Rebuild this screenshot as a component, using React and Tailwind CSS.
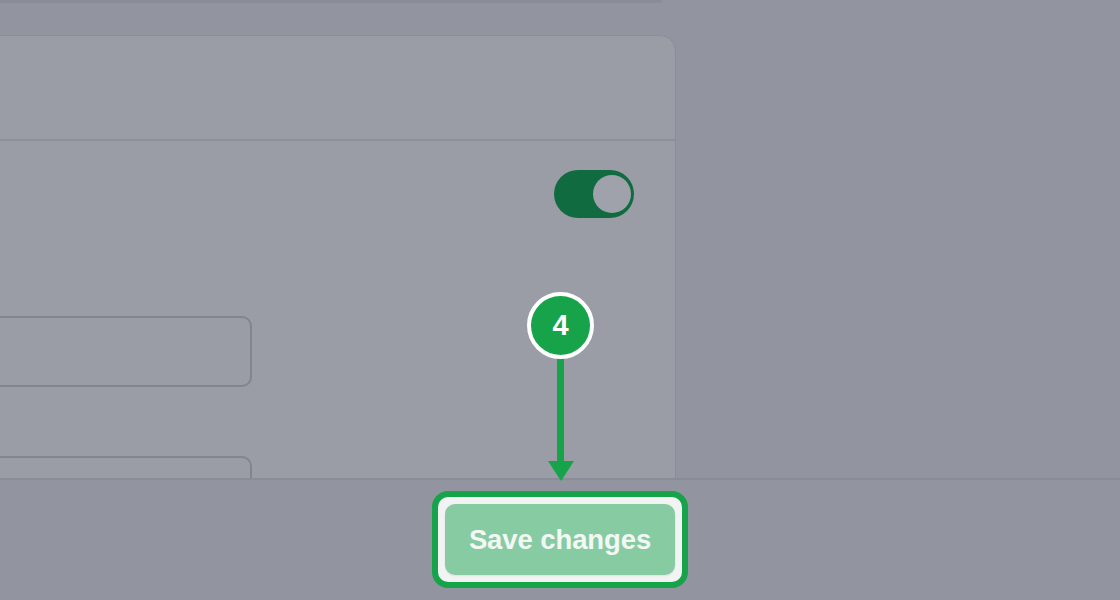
export default function App() {
  return (
    <div className="relative w-[1120px] h-[600px] overflow-hidden bg-[#92959f] flex flex-col" style={{ fontFamily: '"Liberation Sans", Arial, sans-serif' }}>
      <div className="h-[3px] w-[662px] bg-[#8a8d98] rounded-br-[6px] shrink-0" />
      <div className="flex-1 overflow-hidden">
        <div className="mt-[32px] ml-[-40px] w-[716px] h-[600px] bg-[#9a9da6] border border-[#8b8e98] rounded-tr-[16px]">
          <div className="h-[105px] border-b-2 border-[#8d909a]" />
          <div className="flex flex-col pt-[29px] pr-[41px] pl-[24px]">
            <div className="flex justify-end">
              <div className="w-[80px] h-[48px] rounded-full bg-[#116b40] flex items-center justify-end pr-[3px]">
                <div className="w-[38px] h-[38px] rounded-full bg-[#9fa2aa]" />
              </div>
            </div>
            <div className="mt-[98px] h-[71px] w-[267px] rounded-[10px] border-2 border-[#82858f]" />
            <div className="mt-[69px] h-[71px] w-[267px] rounded-[10px] border-2 border-[#82858f]" />
          </div>
        </div>
      </div>
      <div className="h-[122px] shrink-0 bg-[#92959f] border-t-2 border-[#8a8d97] flex items-center justify-center">
        <div className="w-[256px] h-[97px] rounded-[16px] border-[6px] border-[#16a34a] bg-[#f1f4f3] p-[7px] mt-[-1px]">
          <div className="w-full h-full rounded-[10px] bg-[#87cba3] shadow-[0_1px_2px_rgba(0,0,0,0.08)] flex items-center justify-center text-[27.5px] font-bold text-[#f4f8f5] tracking-[-0.1px]">
            Save changes
          </div>
        </div>
      </div>
      <div className="absolute left-[527px] top-[292px] w-[67px] h-[67px] rounded-full border-[4px] border-white bg-[#16a34a] flex items-center justify-center text-white font-bold text-[29px]">
        4
      </div>
      <div className="absolute left-[557px] top-[359px] w-[7px] h-[104px] bg-[#16a34a]" />
      <svg className="absolute left-[548px] top-[461px]" width="26" height="20" viewBox="0 0 26 20">
        <polygon points="0,0 26,0 13,20" fill="#16a34a" />
      </svg>
    </div>
  );
}
